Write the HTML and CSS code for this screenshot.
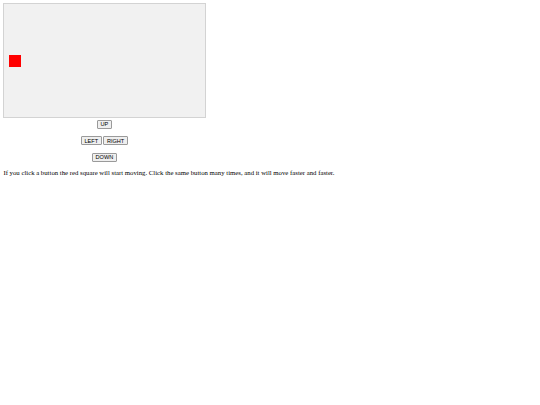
FILE: index.html
```html
<!DOCTYPE html>
<html>
<head>
<meta charset="utf-8">
<link rel="stylesheet" href="styles.css">
</head>
<body>
<div class="game"><div class="piece"></div></div>
<div class="controls">
  <div class="row"><button class="btn">UP</button></div>
  <div class="row"><button class="btn">LEFT</button><button class="btn">RIGHT</button></div>
  <div class="row"><button class="btn">DOWN</button></div>
</div>
<p class="note">If you click a button the red square will start moving. Click the same button many times, and it will move faster and faster.</p>
</body>
</html>
```

FILE: styles.css
```css
body {
  margin: 3.4px;
  font-family: "Liberation Serif", "Times New Roman", serif;
  font-size: 6.75px;
  line-height: 1.15;
  background: #ffffff;
  color: #000000;
}
.game {
  position: relative;
  width: 201px;
  height: 113px;
  border: 1px solid #d3d3d3;
  background: #f1f1f1;
  margin-bottom: 1.5px;
}
.piece {
  position: absolute;
  left: 4.2px;
  top: 50.4px;
  width: 12.6px;
  height: 12.6px;
  background: #ff0000;
}
.controls {
  width: 202px;
  display: flex;
  flex-direction: column;
  gap: 7.5px;
}
.row {
  display: flex;
  justify-content: center;
  gap: 1.7px;
}
.btn {
  font-family: "Liberation Sans", Arial, sans-serif;
  font-size: 5.6px;
  line-height: 6.5px;
  height: 9px;
  padding: 0 2.5px;
  margin: 0;
  border: 1px solid #9a9a9a;
  border-radius: 1px;
  background: #efefef;
  color: #000000;
}
.note {
  margin: 6.7px 0;
}
```
